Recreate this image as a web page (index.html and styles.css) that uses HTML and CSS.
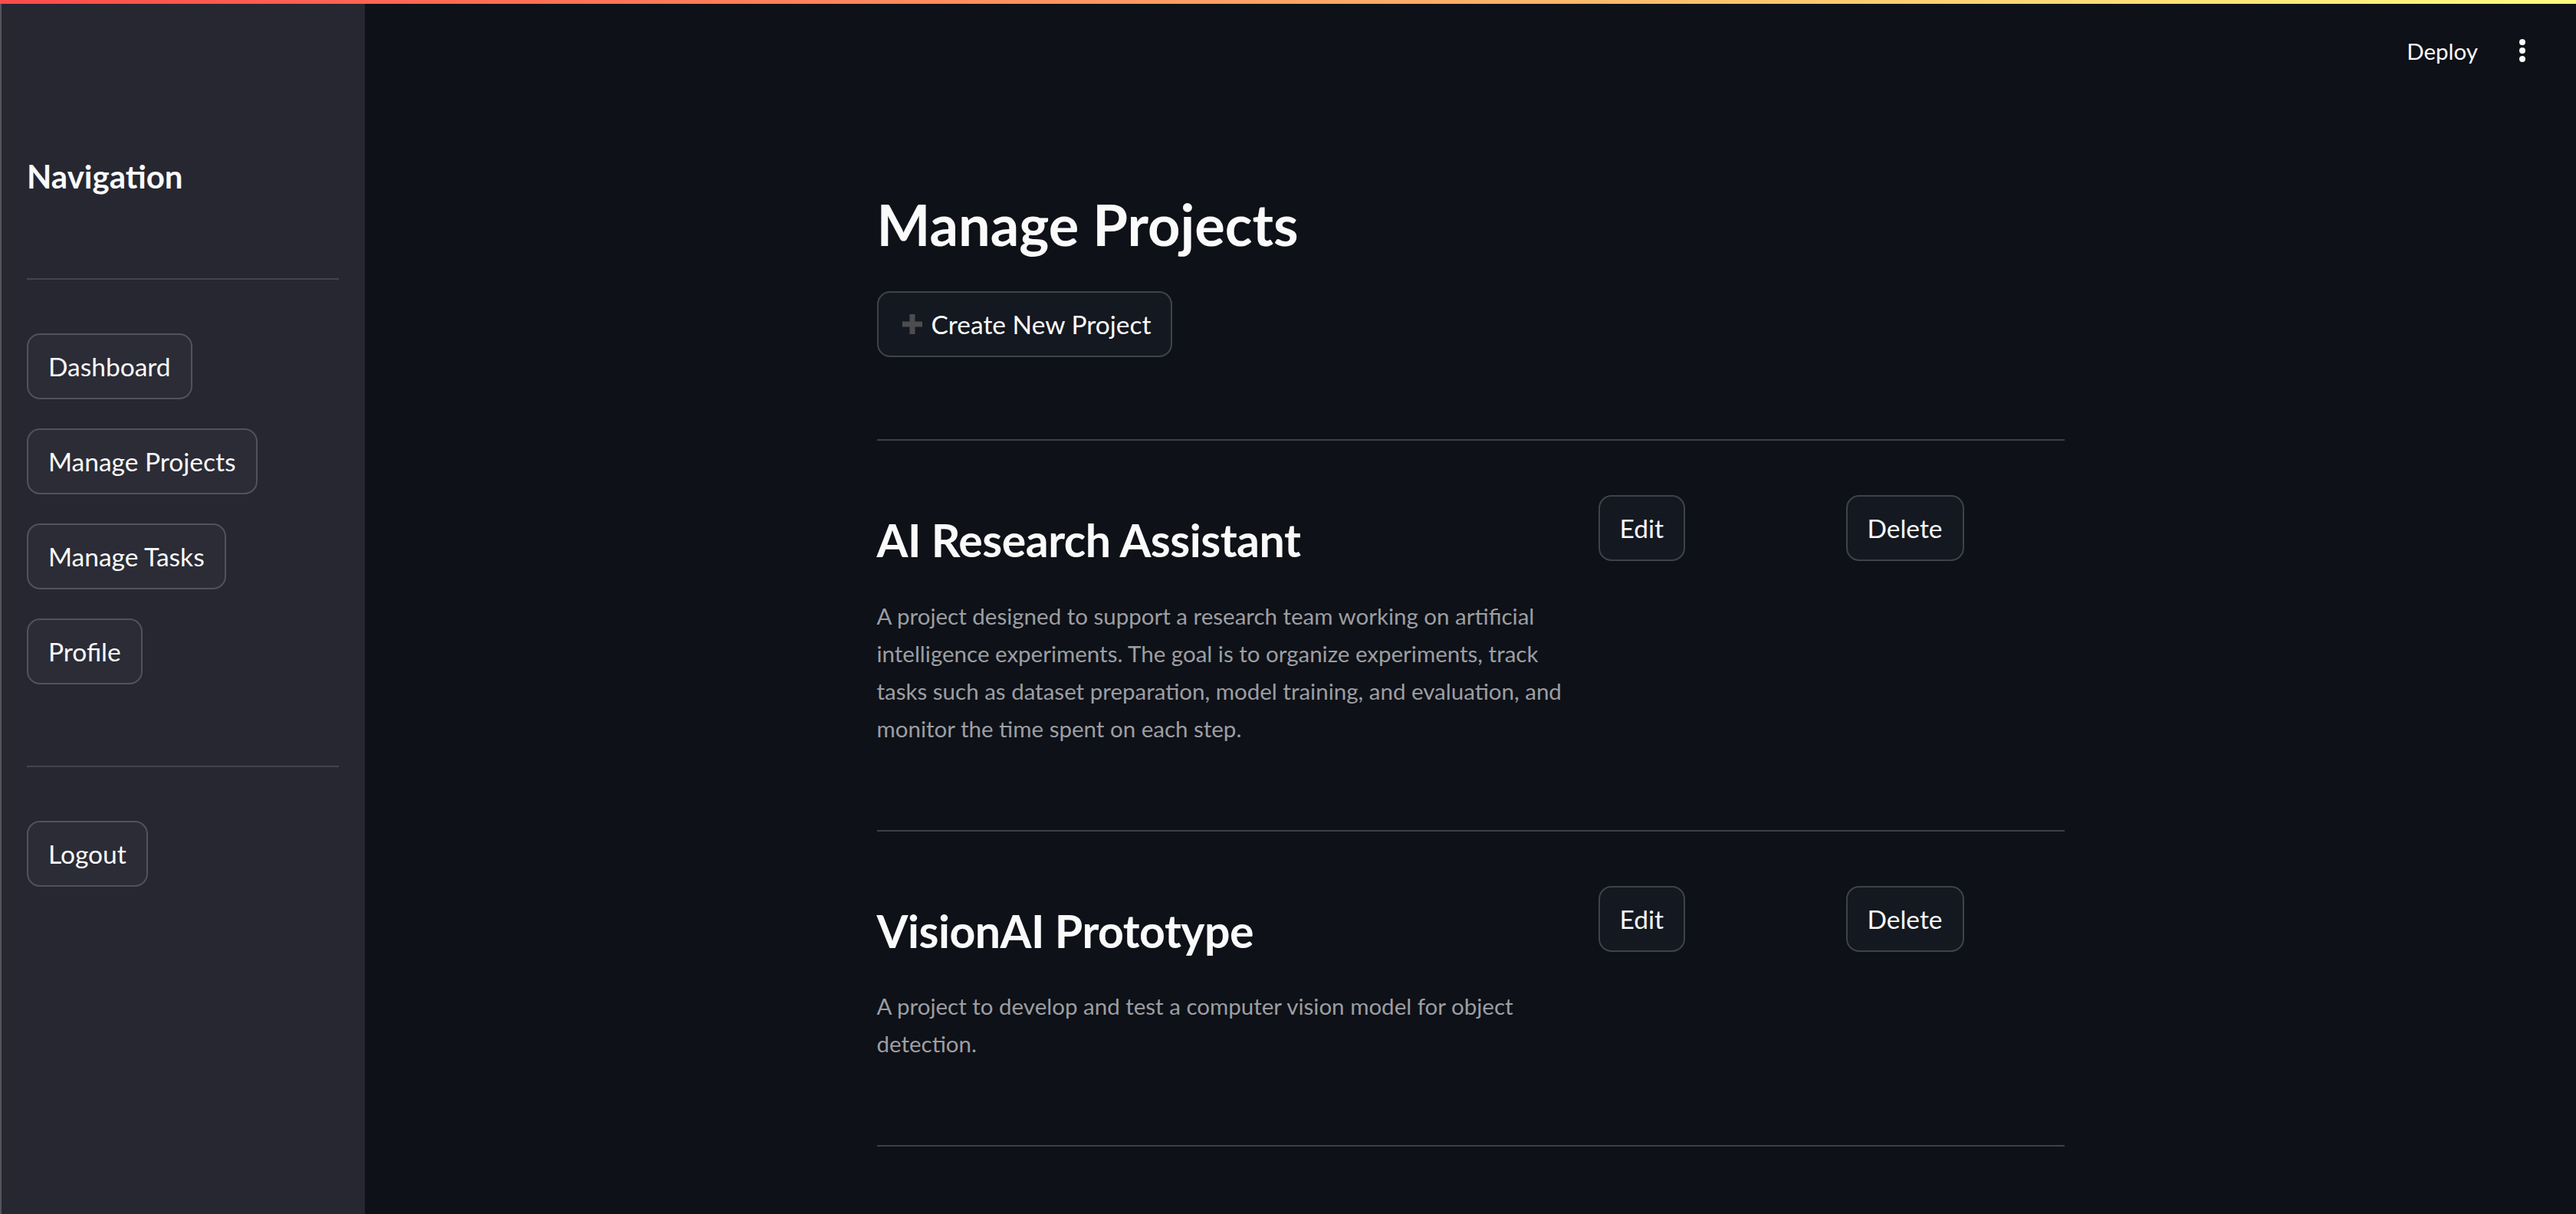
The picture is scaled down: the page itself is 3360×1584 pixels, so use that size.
FILE: index.html
```html
<!DOCTYPE html>
<html lang="en">
<head>
<meta charset="utf-8">
<title>Manage Projects</title>
<link rel="stylesheet" href="styles.css">
</head>
<body>
<div class="decoration"></div>
<div class="app">
  <aside class="sidebar">
    <h3 class="side-title">Navigation</h3>
    <hr class="side-rule">
    <nav class="nav-list">
      <button class="btn btn-side">Dashboard</button>
      <button class="btn btn-side">Manage Projects</button>
      <button class="btn btn-side">Manage Tasks</button>
      <button class="btn btn-side">Profile</button>
    </nav>
    <hr class="side-rule side-rule-low">
    <button class="btn btn-side">Logout</button>
  </aside>
  <main class="main">
    <header class="topbar">
      <span class="deploy">Deploy</span>
      <svg class="kebab" width="8" height="30" viewBox="0 0 8 30"><circle cx="4" cy="4" r="4" fill="#fafafa"/><circle cx="4" cy="15" r="4" fill="#fafafa"/><circle cx="4" cy="26" r="4" fill="#fafafa"/></svg>
    </header>
    <div class="content">
      <h1 class="page-title">Manage Projects</h1>
      <button class="btn btn-main btn-create"><svg class="plus" width="26" height="26" viewBox="0 0 26 26"><rect x="9.5" y="0" width="7" height="26" fill="#4d4d4f"/><rect x="0" y="9.5" width="26" height="7" fill="#4d4d4f"/></svg><span>Create New Project</span></button>
      <hr class="rule rule-top">
      <section class="project">
        <div class="project-info">
          <h2 class="project-title">AI Research Assistant</h2>
          <p class="project-desc">A project designed to support a research team working on artificial intelligence experiments. The goal is to organize experiments, track tasks such as dataset preparation, model training, and evaluation, and monitor the time spent on each step.</p>
        </div>
        <div class="project-action"><button class="btn btn-main">Edit</button></div>
        <div class="project-action"><button class="btn btn-main">Delete</button></div>
      </section>
      <hr class="rule">
      <section class="project">
        <div class="project-info">
          <h2 class="project-title">VisionAI Prototype</h2>
          <p class="project-desc">A project to develop and test a computer vision model for object detection.</p>
        </div>
        <div class="project-action"><button class="btn btn-main">Edit</button></div>
        <div class="project-action"><button class="btn btn-main">Delete</button></div>
      </section>
      <hr class="rule">
    </div>
  </main>
</div>
</body>
</html>
```

FILE: styles.css
```css
html, body {
  margin: 0;
  padding: 0;
}

body {
  background: #0e1117;
  color: #fafafa;
  font-family: Lato, "Noto Sans", sans-serif;
  overflow: hidden;
}

.decoration {
  height: 5px;
  background: linear-gradient(90deg, #ff4b4b, #fffd80);
}

.app {
  display: flex;
  min-height: calc(100vh - 5px);
}

/* Sidebar */
.sidebar {
  flex: none;
  width: 476px;
  box-sizing: border-box;
  background: #262730;
  border-left: 2px solid #55565c;
  padding: 200px 34px 0 33px;
  display: flex;
  flex-direction: column;
  align-items: flex-start;
}

.side-title {
  margin: 0;
  font-size: 42px;
  line-height: 1.2;
  font-weight: 700;
}

.side-rule {
  align-self: stretch;
  border: none;
  height: 2px;
  background: #43444d;
  margin: 108px 0 70px;
}

.side-rule-low {
  margin-top: 106px;
}

.nav-list {
  display: flex;
  flex-direction: column;
  align-items: flex-start;
  gap: 38px;
}

/* Buttons */
.btn {
  display: inline-flex;
  align-items: center;
  box-sizing: border-box;
  height: 86px;
  padding: 0 26px;
  border-radius: 17px;
  font-family: inherit;
  font-size: 33.5px;
  font-weight: 400;
  color: #fafafa;
  cursor: pointer;
}

.btn-side {
  background: #2b2c36;
  border: 2px solid #51525a;
}

.btn-main {
  background: #141821;
  border: 2px solid #3f4249;
}

/* Main */
.main {
  flex: 1;
  display: flex;
  flex-direction: column;
}

.topbar {
  height: 122px;
  display: flex;
  align-items: center;
  justify-content: flex-end;
  gap: 54px;
  padding-right: 66px;
}

.deploy {
  font-size: 29.5px;
  color: #fafafa;
}

.kebab {
  display: block;
}

.content {
  width: 1549px;
  margin: 0 auto;
  padding-top: 122px;
}

.page-title {
  margin: 0;
  font-size: 74px;
  line-height: 1.2;
  font-weight: 700;
}

.btn-create {
  margin-top: 42px;
  gap: 12px;
  padding-left: 31px;
}

.plus {
  display: block;
  flex: none;
}

.rule {
  border: none;
  height: 2px;
  background: #3d4046;
  margin: 0;
}

.rule-top {
  margin-top: 107px;
}

.project {
  display: grid;
  grid-template-columns: 927px 309px 1fr;
  column-gap: 14px;
  align-items: start;
  padding: 71px 0 108px;
}

.project-info {
  padding-top: 24px;
}

.project-title {
  margin: 0;
  font-size: 59px;
  line-height: 1.2;
  font-weight: 700;
  letter-spacing: -0.5px;
}

.project-desc {
  margin: 38px 0 0;
  font-size: 29.5px;
  line-height: 49px;
  color: #9c9ea3;
}
```
